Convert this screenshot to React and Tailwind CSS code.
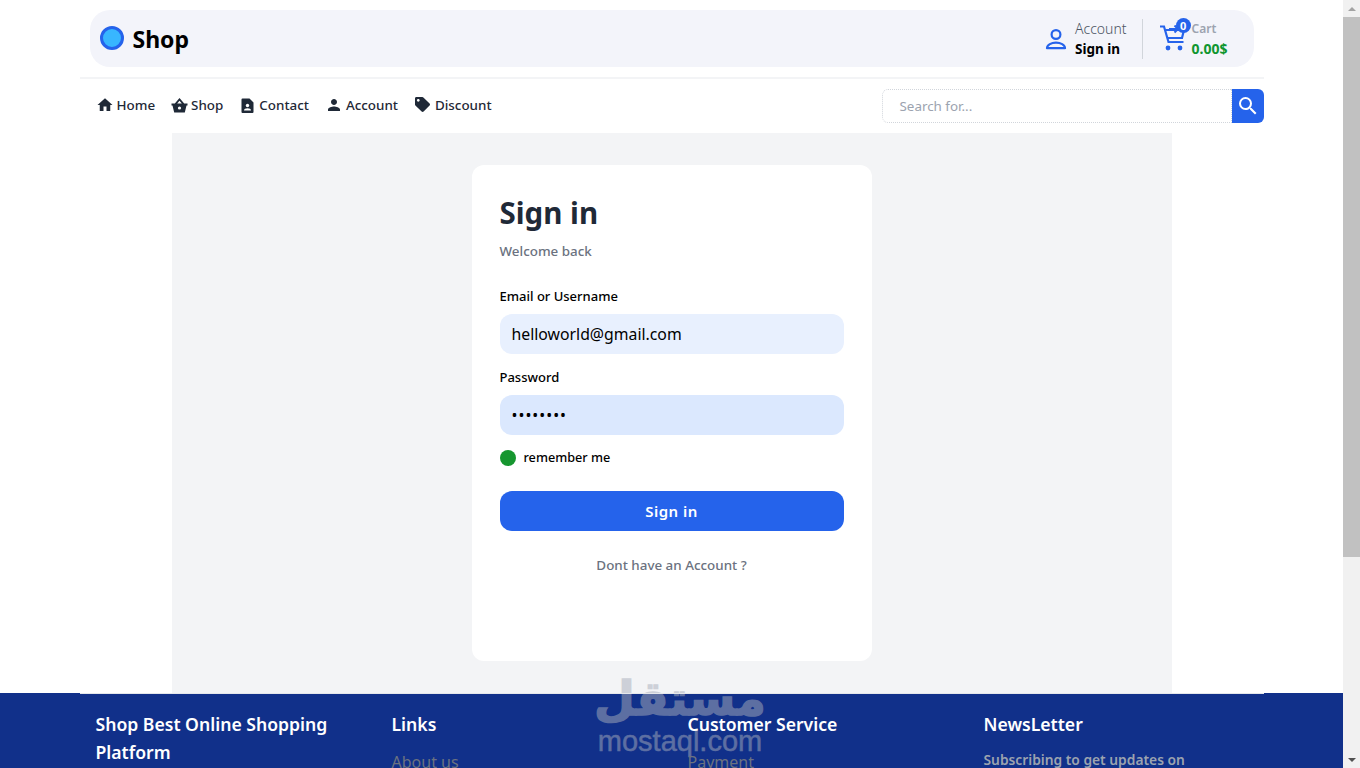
import React from 'react';
import { MdHome, MdPerson, MdSearch } from 'react-icons/md';
import { FaTag } from 'react-icons/fa';

const BasketIcon = () => (
    <svg width="17" height="18" viewBox="0 0 17 18" fill="#1f2937">
        <path fillRule="evenodd" d="M8.500 2 3.800 7.500H.5v2h1l1.700 7h10.600l1.700-7h1v-2h-3.300zM8.500 4.800l2.300 2.700H6.200z" />
        <circle cx="8.500" cy="12" r="1.600" fill="#fff" />
    </svg>
);

const ContactIcon = () => (
    <svg width="17" height="18" viewBox="-1 0 17 18">
        <path d="M2.500 2.500h7l4 4v9.500a1 1 0 0 1-1 1h-10a1 1 0 0 1-1-1v-12.500a1 1 0 0 1 1-1z" fill="#1f2937" />
        <circle cx="7.500" cy="9.500" r="1.700" fill="#fff" />
        <path d="M4 14.500c0-1.600 1.500-2.300 3.500-2.300s3.500.7 3.500 2.300z" fill="#fff" />
    </svg>
);

const TagIcon = () => (
    <span className="flex w-[18px] justify-center">
        <FaTag size={15} className="text-[#1f2937]" />
    </span>
);

const navItems = [
    { label: 'Home', icon: <MdHome size={18} className="text-[#1f2937]" /> },
    { label: 'Shop', icon: <BasketIcon /> },
    { label: 'Contact', icon: <ContactIcon /> },
    { label: 'Account', icon: <MdPerson size={18} className="text-[#1f2937]" /> },
    { label: 'Discount', icon: <TagIcon /> },
];

const UserIcon = () => (
    <svg width="22" height="22" viewBox="0 0 22 22" fill="none" stroke="#2563eb" strokeWidth="2.200">
        <circle cx="11" cy="6.500" r="4.400" />
        <path d="M2 20.200h18c0-3.500-4.500-5.500-9-5.500s-9 2-9 5.500z" strokeLinejoin="round" />
    </svg>
);

const CartIcon = () => (
    <svg width="26" height="27" viewBox="0 0 26 27" fill="none" stroke="#2563eb" strokeWidth="2.200">
        <path d="M0 1.500h4l4.500 15.500h15" />
        <path d="M5.500 5H24l-2 8H7.500" />
        <path d="M9 4h9M14.500.5 18 4l-3.500 3.500" strokeWidth="2" />
        <circle cx="8" cy="23" r="2.400" fill="#2563eb" stroke="none" />
        <circle cx="20" cy="23" r="2.400" fill="#2563eb" stroke="none" />
    </svg>
);

const Field = ({ label, value, bg, type = 'text', className }) => (
    <div>
        <label className="block text-[13px] font-medium leading-5 text-black">{label}</label>
        <input
            readOnly
            type={type}
            value={value}
            className={`mt-2 block h-10 w-full rounded-xl px-3 text-[15.8px] text-black outline-none ${bg} ${className || ''}`}
        />
    </div>
);

const FooterColumn = ({ title, children }) => (
    <div className="w-[296px] shrink-0 px-4 pt-4">
        <h3 className="text-[17.6px] font-semibold leading-7 text-white">{title}</h3>
        {children}
    </div>
);

export default function App() {
    return (
        <div className="flex h-screen overflow-hidden bg-white font-['Noto_Sans',sans-serif]">
            <div className="relative min-w-0 flex-1 overflow-hidden">
                <div className="mx-auto w-[1184px]">
                    <header className="border-b-2 border-[#f3f4f6] px-2.5 pb-2.5 pt-2.5">
                        <div className="flex h-[57px] items-center justify-between rounded-[20px] bg-[#f3f4fa] pl-2.5 pr-[26px]">
                            <div className="flex items-center gap-[9px]">
                                <span className="-mt-px block h-6 w-6 rounded-full border-[3px] border-[#2563eb] bg-[#38b6ff]" />
                                <span className="text-[23px] font-bold leading-8 text-black">Shop</span>
                            </div>
                            <div className="flex h-10 items-center">
                                <div className="flex h-full items-center gap-2 border-r border-[#d1d5db] pr-[15px]">
                                    <UserIcon />
                                    <div className="text-sm leading-5">
                                        <p className="font-light text-[#4b5563]">Account</p>
                                        <p className="text-[13.5px] font-bold text-black">Sign in</p>
                                    </div>
                                </div>
                                <div className="relative ml-[17px] flex items-center gap-1.5">
                                    <CartIcon />
                                    <span className="absolute -top-px left-4 flex h-[15px] w-[15px] items-center justify-center rounded-full bg-[#2563eb] text-[11px] font-bold leading-none text-white">0</span>
                                    <div className="text-xs leading-5">
                                        <p className="font-semibold text-[#9ca3af]">Cart</p>
                                        <p className="text-sm font-bold text-[#0f962f]">0.00$</p>
                                    </div>
                                </div>
                            </div>
                        </div>
                    </header>
                    <nav className="flex h-[54px] items-center justify-between pl-4">
                        <ul className="-mt-0.5 flex items-center gap-4">
                            {navItems.map(({ label, icon }) => (
                                <li key={label} className="flex items-center gap-[3px] text-[13.4px] font-medium text-[#1f2937]">
                                    {icon}
                                    <span>{label}</span>
                                </li>
                            ))}
                        </ul>
                        <div className="flex h-[34px] w-[382px]">
                            <div className="flex min-w-0 flex-1 items-center rounded-l-md border border-dotted border-[#d1d5db] pl-[17px] text-[13.4px] text-[#9ca3af]">Search for...</div>
                            <button className="flex w-8 items-center justify-center rounded-r-md bg-[#2563eb] text-white">
                                <MdSearch size={24} />
                            </button>
                        </div>
                    </nav>
                </div>

                <main className="mx-auto h-[560px] w-[1000px] bg-[#f3f4f6] pt-8">
                    <div className="mx-auto h-[496px] w-[400px] rounded-xl bg-white px-7 pt-7">
                        <h1 className="text-[29.5px] font-bold leading-10 text-[#1f2937]">Sign in</h1>
                        <p className="mt-2 text-[13.4px] font-medium leading-5 text-[#6b7280]">Welcome back</p>
                        <div className="mt-[25px] flex flex-col gap-[13px]">
                            <Field label="Email or Username" value="helloworld@gmail.com" bg="bg-[#e8f0fe]" />
                            <Field label="Password" value="password" type="password" bg="bg-[#dbe8fe]" className="tracking-[1px]" />
                        </div>
                        <div className="mt-[13px] flex h-5 items-center gap-2">
                            <span className="block h-4 w-4 rounded-full bg-[#16962f]" />
                            <span className="text-[12.7px] font-medium text-black">remember me</span>
                        </div>
                        <button className="mt-[23px] h-10 w-full rounded-xl bg-[#2563eb] text-[15px] font-semibold tracking-[0.5px] text-white">Sign in</button>
                        <p className="mt-6 text-center text-[13.4px] font-medium leading-5 text-[#6b7280]">Dont have an Account ?</p>
                    </div>
                </main>

                <footer className="h-[75px] overflow-hidden bg-[#11308a]">
                    <div className="relative z-10 mx-auto flex w-[1184px] border-t border-[#e5e7eb]">
                        <FooterColumn title="Shop Best Online Shopping Platform" />
                        <FooterColumn title="Links">
                            <p className="mt-3 text-base text-[#6b7280]">About us</p>
                        </FooterColumn>
                        <FooterColumn title="Customer Service">
                            <p className="mt-3 text-base text-[#6b7280]">Payment</p>
                        </FooterColumn>
                        <FooterColumn title="NewsLetter">
                            <p className="mt-3 text-[13.8px] font-semibold text-[#9ca3af]">Subscribing to get updates on</p>
                        </FooterColumn>
                    </div>
                </footer>

                <div className="pointer-events-none absolute left-[597px] top-[670px] z-[5] flex w-[166px] flex-col items-center text-[#a8aebb] opacity-50">
                    <span dir="rtl" className="font-['DejaVu_Sans',sans-serif] text-[47px] font-bold leading-[58px] [-webkit-text-stroke:1.5px_#a8aebb]">مستقل</span>
                    <span className="font-['Liberation_Sans',sans-serif] text-[29px] leading-[26px] [-webkit-text-stroke:0.5px_#a8aebb]">mostaql.com</span>
                </div>
            </div>

            <aside className="flex w-[17px] shrink-0 flex-col bg-[#f1f1f1]">
                <div className="flex h-[17px] items-center justify-center">
                    <span className="block h-0 w-0 border-x-4 border-b-4 border-x-transparent border-b-[#a3a3a3]" />
                </div>
                <div className="h-[540px] bg-[#c1c1c1]" />
                <div className="mt-auto flex h-[17px] items-center justify-center">
                    <span className="block h-0 w-0 border-x-4 border-t-4 border-x-transparent border-t-[#505050]" />
                </div>
            </aside>
        </div>
    );
}
